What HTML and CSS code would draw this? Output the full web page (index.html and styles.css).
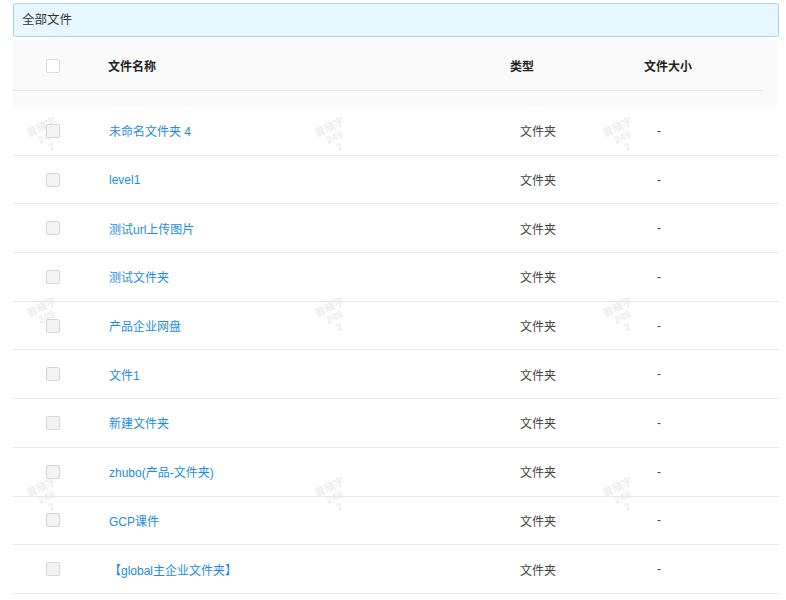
FILE: index.html
```html
<!DOCTYPE html>
<html lang="zh-CN">
<head>
<meta charset="utf-8">
<title>全部文件</title>
<link rel="stylesheet" href="styles.css">
</head>
<body>
<div class="page">
  <div class="crumb">全部文件</div>
  <div class="thead-wrap">
    <div class="thead">
      <div class="cell cell-check"><span class="cb"></span></div>
      <div class="cell cell-name">文件名称</div>
      <div class="cell cell-type">类型</div>
      <div class="cell cell-size">文件大小</div>
    </div>
  </div>
  <div class="tbody">
    <div class="watermarks">
      <div class="wm">曾晓宇<br>249<br>2</div>
      <div class="wm">曾晓宇<br>249<br>2</div>
      <div class="wm">曾晓宇<br>249<br>2</div>
      <div class="wm">曾晓宇<br>249<br>2</div>
      <div class="wm">曾晓宇<br>249<br>2</div>
      <div class="wm">曾晓宇<br>249<br>2</div>
      <div class="wm">曾晓宇<br>249<br>2</div>
      <div class="wm">曾晓宇<br>249<br>2</div>
      <div class="wm">曾晓宇<br>249<br>2</div>
    </div>
    <div class="row"><div class="cell cell-check"><span class="cb dis"></span></div><div class="cell cell-name"><a class="link">未命名文件夹 4</a></div><div class="cell cell-type val">文件夹</div><div class="cell cell-size val">-</div></div>
    <div class="row"><div class="cell cell-check"><span class="cb dis"></span></div><div class="cell cell-name"><a class="link">level1</a></div><div class="cell cell-type val">文件夹</div><div class="cell cell-size val">-</div></div>
    <div class="row"><div class="cell cell-check"><span class="cb dis"></span></div><div class="cell cell-name"><a class="link">测试url上传图片</a></div><div class="cell cell-type val">文件夹</div><div class="cell cell-size val">-</div></div>
    <div class="row"><div class="cell cell-check"><span class="cb dis"></span></div><div class="cell cell-name"><a class="link">测试文件夹</a></div><div class="cell cell-type val">文件夹</div><div class="cell cell-size val">-</div></div>
    <div class="row"><div class="cell cell-check"><span class="cb dis"></span></div><div class="cell cell-name"><a class="link">产品企业网盘</a></div><div class="cell cell-type val">文件夹</div><div class="cell cell-size val">-</div></div>
    <div class="row"><div class="cell cell-check"><span class="cb dis"></span></div><div class="cell cell-name"><a class="link">文件1</a></div><div class="cell cell-type val">文件夹</div><div class="cell cell-size val">-</div></div>
    <div class="row"><div class="cell cell-check"><span class="cb dis"></span></div><div class="cell cell-name"><a class="link">新建文件夹</a></div><div class="cell cell-type val">文件夹</div><div class="cell cell-size val">-</div></div>
    <div class="row"><div class="cell cell-check"><span class="cb dis"></span></div><div class="cell cell-name"><a class="link">zhubo(产品-文件夹)</a></div><div class="cell cell-type val">文件夹</div><div class="cell cell-size val">-</div></div>
    <div class="row"><div class="cell cell-check"><span class="cb dis"></span></div><div class="cell cell-name"><a class="link">GCP课件</a></div><div class="cell cell-type val">文件夹</div><div class="cell cell-size val">-</div></div>
    <div class="row"><div class="cell cell-check"><span class="cb dis"></span></div><div class="cell cell-name"><a class="link">【global主企业文件夹】</a></div><div class="cell cell-type val">文件夹</div><div class="cell cell-size val">-</div></div>
  </div>
</div>
</body>
</html>
```

FILE: styles.css
```css
* { box-sizing: border-box; }

html, body {
  margin: 0;
  padding: 0;
  background: #fff;
}

body {
  font-family: "Liberation Sans", "Noto Sans CJK SC", sans-serif;
  font-size: 12px;
  color: #333;
}

.page {
  padding: 3px 7px 0 13px;
}

.crumb {
  height: 34px;
  line-height: 32px;
  padding-left: 8px;
  background: #e6f7ff;
  border: 1px solid #a3d7f0;
  border-radius: 3px;
  color: #333;
  font-size: 12.5px;
}

.thead-wrap {
  margin-top: 3px;
  margin-right: 2px;
  height: 67px;
  background: #fafafa;
  padding-right: 14px;
}

.thead {
  display: grid;
  grid-template-columns: 80px 401px 134px 1fr;
  height: 51px;
  border-bottom: 1px solid #e8e8e8;
  align-items: center;
  font-weight: bold;
  color: #222;
}

.cell-check {
  display: flex;
  justify-content: center;
}

.thead .cell-check { padding-top: 2px; }

.cell-name { padding-left: 15px; }
.cell-type { padding-left: 16px; }
.cell-size { padding-left: 16px; }

.cb {
  display: block;
  width: 14px;
  height: 14px;
  border: 1px solid #d9d9d9;
  border-radius: 2px;
  background: #fff;
}

.cb.dis {
  background: #f3f3f3;
  border-color: #d6d6d6;
}

.tbody {
  position: relative;
}

.row {
  position: relative;
  display: grid;
  grid-template-columns: 80px 401px 134px 1fr;
  height: 48.7px;
  border-bottom: 1px solid #e8e8e8;
  align-items: center;
}

.row .cell-name { padding-left: 16px; }
.row .cell-type { padding-left: 26px; }
.row .cell-size { padding-left: 29px; }

.link {
  color: #1d8ce0;
  text-decoration: none;
}

.val { color: #444; }

.watermarks {
  position: absolute;
  left: 0;
  top: 0;
  width: 766px;
  height: 486px;
  display: grid;
  grid-template-columns: repeat(3, 288px);
  grid-template-rows: repeat(3, 180px);
  pointer-events: none;
}

.wm {
  width: 40px;
  margin: 7px 0 0 43px;
  text-align: center;
  font-size: 10.5px;
  line-height: 11px;
  font-weight: bold;
  color: #eeeeee;
  transform: rotate(-25deg);
}
```
